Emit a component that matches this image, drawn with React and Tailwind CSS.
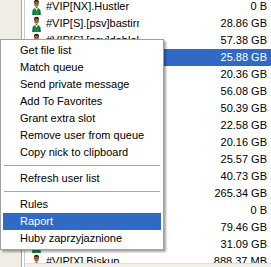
import React from "react";

const rows = [
  ["#VIP[NX].Hustler", "0 B"],
  ["#VIP[S].[psv]bastirr", "28.86 GB"],
  ["#VIP[S].[psv]dablokk", "57.38 GB"],
  ["#VIP[S].Zbyszek", "25.88 GB", true],
  ["#VIP[S].Marian", "20.36 GB"],
  ["#VIP[S].Kolo", "56.08 GB"],
  ["#VIP[S].Tomek", "50.39 GB"],
  ["#VIP[NX].Greg", "22.58 GB"],
  ["#VIP[NX].Fredi", "20.16 GB"],
  ["#VIP[S].Wojtas", "25.57 GB"],
  ["#VIP[S].Ania", "40.73 GB"],
  ["#VIP[X].Mietek", "265.34 GB"],
  ["#VIP[X].Zenek", "0 B"],
  ["#VIP[X].Bolek", "79.46 GB"],
  ["#VIP[X].Lolek", "31.09 GB"],
  ["#VIP[X].Biskup", "888.37 MB"],
];

const menu = [
  "Get file list",
  "Match queue",
  "Send private message",
  "Add To Favorites",
  "Grant extra slot",
  "Remove user from queue",
  "Copy nick to clipboard",
  "-",
  "Refresh user list",
  "-",
  "Rules",
  "Raport",
  "Huby zaprzyjaznione",
];

function UserIcon() {
  return (
    <svg width="11" height="16" viewBox="0 0 11 16" className="shrink-0">
      {/* shirt */}
      <path d="M1 16 L1.5 11.5 Q2 9.5 4 9 L7 9 Q9 9.5 9.5 11.5 L10 16 Z" fill="#1f8a4a" />
      <path d="M2.5 11 L3 16 M8.5 11 L8 16" stroke="#0d5a2c" strokeWidth="0.8" />
      <path d="M4 9 L5.5 11.5 L7 9 Z" fill="#ffffff" />
      {/* neck */}
      <rect x="4.6" y="7.6" width="1.8" height="1.6" fill="#8a5a32" />
      {/* face */}
      <ellipse cx="5.5" cy="4.6" rx="2.4" ry="3.1" fill="#a86a3c" />
      {/* hair */}
      <path d="M2.9 4.2 Q2.8 0.8 5.5 0.8 Q8.2 0.8 8.1 4.2 Q7.4 2.6 5.5 2.6 Q3.6 2.6 2.9 4.2 Z" fill="#2a1a10" />
      <rect x="4.2" y="4.1" width="0.8" height="0.7" fill="#2a1a10" />
      <rect x="6.1" y="4.1" width="0.8" height="0.7" fill="#2a1a10" />
    </svg>
  );
}

export default function App() {
  return (
    <div
      className="relative w-[271px] h-[267px] overflow-hidden bg-white text-[11px] text-black"
      style={{ fontFamily: '"Liberation Sans", Arial, sans-serif' }}
    >
      <div className="flex h-full">
        {/* left gutter */}
        <div className="w-[21px] shrink-0 bg-[#efede4]" />
        <div className="w-px shrink-0 bg-[#a7a69c]" />
        <div className="w-[2px] shrink-0 bg-white" />
        <div className="w-px shrink-0 bg-[#c3cbd6]" />

        {/* list */}
        <div className="flex-1 flex flex-col min-w-0">
          <div className="flex-1 overflow-hidden">
            <div className="flex flex-col mt-[-2px]">
              {rows.map(([name, size, sel], i) => (
                <div
                  key={i}
                  className={`flex h-[17px] items-center shrink-0 ${sel ? "bg-[#316ac5] text-white" : ""}`}
                >
                  <div className="w-[114px] shrink-0 flex items-center gap-[4px] pl-[6px] overflow-hidden whitespace-nowrap">
                    <UserIcon />
                    <span>{name}</span>
                  </div>
                  <div className="flex-1 text-right pr-[4px] whitespace-nowrap">{size}</div>
                </div>
              ))}
            </div>
          </div>
          <div className="h-[4px] shrink-0 bg-[#f1efe6] border-t border-[#dcdfe8]" />
        </div>
      </div>

      {/* context menu */}
      <div className="absolute left-0 top-[39px] w-[164px] bg-white border border-[#a0a0a0] px-[2px] py-[2px] shadow-[2px_2px_2px_rgba(0,0,0,0.35)]">
        {menu.map((m, i) =>
          m === "-" ? (
            <div key={i} className="h-[9px] flex items-center px-px">
              <div className="h-px w-full bg-[#aca899]" />
            </div>
          ) : (
            <div
              key={i}
              className={`h-[17px] flex items-center pl-[17px] whitespace-nowrap ${m === "Raport" ? "bg-[#316ac5] text-white" : ""}`}
            >
              {m}
            </div>
          )
        )}
      </div>
    </div>
  );
}
